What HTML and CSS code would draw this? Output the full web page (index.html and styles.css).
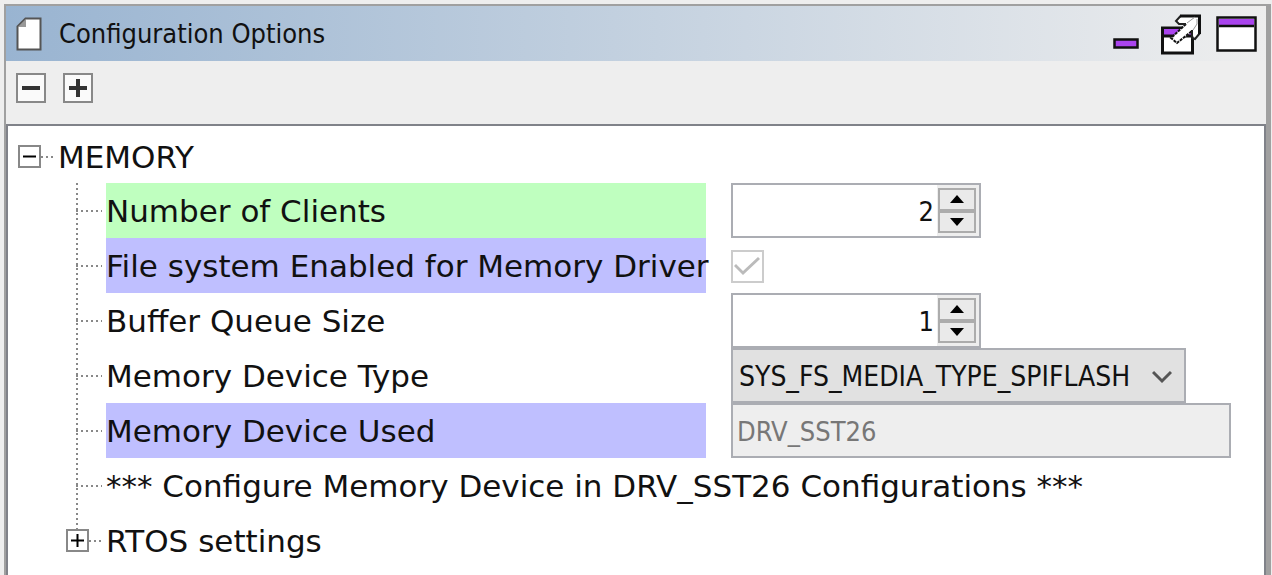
FILE: index.html
```
<!DOCTYPE html>
<html lang="en">
<head>
<meta charset="utf-8">
<title>Configuration Options</title>
<link rel="stylesheet" href="styles.css">
</head>
<body>
<main class="panel">
  <header class="titlebar">
    <svg class="doc-icon" width="26" height="34" viewBox="0 0 26 34" aria-hidden="true">
      <path d="M1.500 9.500 L9.500 1.500 H24.500 V32.500 H1.500 Z" fill="#fff" stroke="#555" stroke-width="2"/>
      <path d="M2 10 L10 2 V10 Z" fill="#999"/>
    </svg>
    <h1 class="title">Configuration Options</h1>
    <div class="window-actions">
      <button class="icon-button" type="button" aria-label="Minimize">
        <svg width="26" height="42" viewBox="0 0 26 42"><rect x="1.500" y="26.500" width="23" height="8" fill="#aa44ee" stroke="#111" stroke-width="2.500"/></svg>
      </button>
      <button class="icon-button" type="button" aria-label="Float">
        <svg width="42" height="42" viewBox="0 0 42 42">
          <rect x="2.500" y="15" width="30" height="25" fill="#fff" stroke="#111" stroke-width="3"/>
          <rect x="4" y="16" width="27" height="6" fill="#aa44ee"/>
          <path d="M3 23 H32" stroke="#111" stroke-width="3"/>
          <path d="M16 8 L21 2 H40 V20 L34 26 L32 19 L17 30 L11 25 L26 11 H19 Z" fill="#fff"/>
          <path d="M26 11 L11 25 L17 30 L32 18" fill="none" stroke="#111" stroke-width="2" stroke-dasharray="3 1"/>
          <path d="M26 11 H19 L16 8 L21 2.500 M32 17 V25 L35 26 L40 20" fill="none" stroke="#222" stroke-width="2"/>
          <path d="M20 3 H39.500 V21" fill="none" stroke="#111" stroke-width="3"/>
          <path d="M27 10 L35 4 M33 17 L37 11 V6" fill="none" stroke="#999" stroke-width="1"/>
        </svg>
      </button>
      <button class="icon-button" type="button" aria-label="Maximize">
        <svg width="42" height="42" viewBox="0 0 42 42">
          <rect x="1.500" y="4.500" width="38" height="33" fill="#fff" stroke="#111" stroke-width="2.500"/>
          <rect x="3" y="6" width="35" height="6" fill="#aa44ee"/>
          <path d="M3 13 H38" stroke="#111" stroke-width="2.500"/>
        </svg>
      </button>
    </div>
  </header>

  <div class="toolbar">
    <button class="tool" type="button" aria-label="Collapse all">
      <svg width="26" height="26" viewBox="0 0 26 26"><path d="M4 13 H22" stroke="#333" stroke-width="4"/></svg>
    </button>
    <button class="tool" type="button" aria-label="Expand all">
      <svg width="26" height="26" viewBox="0 0 26 26"><path d="M4 13 H22 M13 4 V22" stroke="#333" stroke-width="4"/></svg>
    </button>
  </div>

  <section class="content">
    <div class="row root">
      <button class="toggle" type="button" aria-label="Collapse MEMORY" aria-expanded="true">
        <svg width="19" height="19" viewBox="0 0 19 19"><path d="M3 9.500 H16" stroke="#000" stroke-width="2"/></svg>
      </button>
      <span class="link short"></span>
      <span class="name">MEMORY</span>
    </div>
    <ul class="tree">
      <li class="row">
        <span class="link"></span>
        <label class="name wide changed" for="clients">Number of Clients</label>
        <div class="spinner">
          <input class="number" id="clients" type="number" value="2">
          <div class="steps">
            <button class="step" type="button" aria-label="Increase clients"><svg width="14" height="8" viewBox="0 0 14 8"><path d="M0 8 L7 0 L14 8 Z"/></svg></button>
            <button class="step" type="button" aria-label="Decrease clients"><svg width="14" height="8" viewBox="0 0 14 8"><path d="M0 0 H14 L7 8 Z"/></svg></button>
          </div>
        </div>
      </li>
      <li class="row">
        <span class="link"></span>
        <label class="name wide locked" for="filesystem">File system Enabled for Memory Driver</label>
        <input class="check" id="filesystem" type="checkbox" checked disabled>
      </li>
      <li class="row">
        <span class="link"></span>
        <label class="name wide" for="queue">Buffer Queue Size</label>
        <div class="spinner">
          <input class="number" id="queue" type="number" value="1">
          <div class="steps">
            <button class="step" type="button" aria-label="Increase queue size"><svg width="14" height="8" viewBox="0 0 14 8"><path d="M0 8 L7 0 L14 8 Z"/></svg></button>
            <button class="step" type="button" aria-label="Decrease queue size"><svg width="14" height="8" viewBox="0 0 14 8"><path d="M0 0 H14 L7 8 Z"/></svg></button>
          </div>
        </div>
      </li>
      <li class="row">
        <span class="link"></span>
        <label class="name wide" for="type">Memory Device Type</label>
        <div class="select-box">
          <select class="select" id="type"><option>SYS_FS_MEDIA_TYPE_SPIFLASH</option></select>
          <svg class="chevron" width="20" height="14" viewBox="0 0 20 14" aria-hidden="true"><path d="M1 2 L10 11 L19 2" fill="none" stroke="#555" stroke-width="3"/></svg>
        </div>
      </li>
      <li class="row">
        <span class="link"></span>
        <label class="name wide locked" for="used">Memory Device Used</label>
        <input class="text" id="used" type="text" value="DRV_SST26" disabled>
      </li>
      <li class="row">
        <span class="link"></span>
        <span class="name">*** Configure Memory Device in DRV_SST26 Configurations ***</span>
      </li>
      <li class="row last">
        <button class="toggle" type="button" aria-label="Expand RTOS settings" aria-expanded="false">
          <svg width="19" height="19" viewBox="0 0 19 19"><path d="M3 9.500 H16 M9.500 3 V16" stroke="#000" stroke-width="2"/></svg>
        </button>
        <span class="link short"></span>
        <span class="name">RTOS settings</span>
      </li>
    </ul>
  </section>
</main>
</body>
</html>
```
FILE: styles.css
```
* {
  box-sizing: border-box;
}

body {
  margin: 0;
  background: #eee;
  color: #111;
  font-family: "DejaVu Sans", Verdana, sans-serif;
  font-size: 31px;
  overflow: hidden;
}

button {
  padding: 0;
  font: inherit;
}

svg {
  display: block;
}

.panel {
  display: flex;
  flex-direction: column;
  min-height: 100vh;
  margin: 4px 1px 0 4px;
  border: solid #a0a0a0;
  border-width: 2px 5px 0 2px;
}

.titlebar {
  display: flex;
  align-items: center;
  height: 55px;
  padding: 0 8px 0 10px;
  background: linear-gradient(90deg, #99b4d1, #eee);
}

.title {
  flex: 1;
  margin: 0 0 0 17px;
  font-family: "DejaVu Sans Condensed", Tahoma, sans-serif;
  font-size: 27px;
  font-weight: 400;
}

.window-actions {
  display: flex;
  gap: 14px;
}

.icon-button {
  border: 0;
  background: none;
}

.icon-button:first-child {
  margin-right: 7px;
}

.toolbar {
  display: flex;
  gap: 17px;
  height: 63px;
  padding: 12px 10px;
}

.tool {
  width: 30px;
  height: 30px;
  border: 2px solid #888;
  background: #fafafa;
}

.content {
  flex: 1;
  padding-top: 4px;
  border: solid #808289;
  border-width: 2px 2px 0 2px;
  background: #fff;
}

.row {
  display: flex;
  align-items: center;
  height: 55px;
}

.root {
  height: 53px;
  padding-left: 10px;
}

.tree {
  margin: 0;
  padding: 0 0 0 68px;
  list-style: none;
}

.tree .row {
  background: repeating-linear-gradient(180deg, #888 0 2px, transparent 2px 5px) left top / 2px 100% no-repeat;
}

.tree .last {
  background-size: 2px 18px;
}

.toggle {
  flex: none;
  width: 23px;
  height: 23px;
  border: 2px solid #888;
  background: #fff;
}

.last .toggle {
  margin-left: -10px;
}

.link {
  flex: none;
  width: 26px;
  height: 2px;
  margin-right: 4px;
  background: repeating-linear-gradient(90deg, #888 0 2px, transparent 2px 5px);
}

.short {
  width: 13px;
}

.name {
  padding-top: 2px;
  line-height: 53px;
  white-space: nowrap;
}

.wide {
  flex: none;
  width: 600px;
  margin-right: 25px;
}

.changed {
  background: #bfffbf;
}

.locked {
  background: #bfbfff;
}

.spinner {
  display: flex;
  width: 250px;
  height: 55px;
  border: 2px solid #abadb3;
  background: #fff;
}

.number,
.text,
.select {
  border: 0;
  color: #111;
  font-family: "DejaVu Sans Condensed", Tahoma, sans-serif;
  font-size: 27px;
}

.number {
  flex: 1;
  min-width: 0;
  padding: 2px 3px 0;
  background: none;
  text-align: right;
  appearance: textfield;
}

.number::-webkit-inner-spin-button {
  appearance: none;
}

.steps {
  display: flex;
  flex-direction: column;
  width: 42px;
  padding: 3px 3px 3px 1px;
  background: #eee;
}

.step {
  display: flex;
  flex: 1;
  align-items: center;
  justify-content: center;
  border: 2px solid #acacac;
  background: #eaeaea;
}

.check {
  appearance: none;
  width: 33px;
  height: 33px;
  margin: 2px 0 0;
  border: 2px solid #ccc;
  background: #fff;
}

.check:checked::before {
  content: "";
  display: block;
  width: 27px;
  height: 20px;
  margin: 4px 1px;
  background: #bbb;
  clip-path: polygon(0 10px, 2px 8px, 9px 15px, 24px 1px, 26px 3px, 9px 19px);
}

.select-box {
  position: relative;
  width: 455px;
}

.select {
  width: 100%;
  height: 55px;
  padding: 2px 40px 0 6px;
  border: 2px solid #abadb3;
  border-radius: 0;
  background: #e1e1e1;
  font-size: 28px;
  appearance: none;
}

.chevron {
  position: absolute;
  top: 22px;
  right: 14px;
  pointer-events: none;
}

.text {
  width: 500px;
  height: 55px;
  padding: 2px 4px 0;
  border: 2px solid #abadb3;
  background: #eee;
  color: #777;
}
```
